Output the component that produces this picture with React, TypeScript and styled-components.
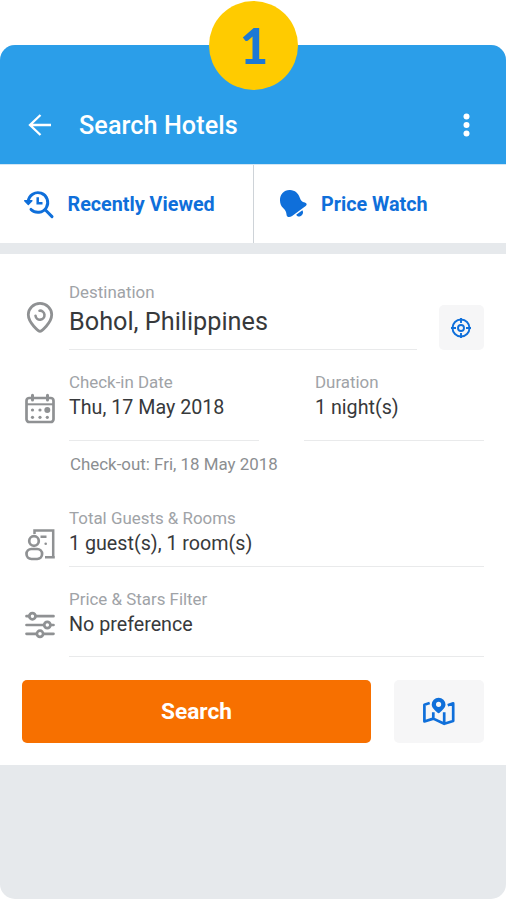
import React from "react";
import styled, { createGlobalStyle } from "styled-components";

const GlobalStyle = createGlobalStyle`
  * { box-sizing: border-box; }
  body { margin: 0; background: #fff; font-family: Roboto, "Liberation Sans", sans-serif; }
  button { font-family: inherit; border: 0; padding: 0; margin: 0; cursor: pointer; }
  svg { display: block; flex: none; }
`;

const blue = "#0f6fda";
const gray = "#8f9193";

const Page = styled.div`
  position: relative;
  width: 506px;
  height: 900px;
  padding: 45px 0 1px;
`;

const StepBadge = styled.div`
  position: absolute;
  top: 1px;
  left: 209px;
  width: 89px;
  height: 89px;
  padding-left: 1px;
  border-radius: 50%;
  background: #ffcb00;
  color: #1c79d4;
  font: 900 48.5px/88px Lato, sans-serif;
  text-align: center;
`;

const Phone = styled.main`
  height: 854px;
  border-radius: 15px;
  overflow: hidden;
  background: #e6e9ec;
`;

const AppBar = styled.header`
  height: 119px;
  padding: 60px 28px 18px 27px;
  display: flex;
  align-items: center;
  background: #2b9ee9;
  color: #fff;
`;

const Title = styled.h1`
  flex: 1;
  margin: 0 0 0 27px;
  font-size: 25.2px;
  line-height: 42px;
  padding-top: 1px;
  font-weight: 500;
  letter-spacing: 0.07px;
`;

const IconButton = styled.button`
  padding-bottom: 2px;
  background: none;
  color: inherit;
`;

const Tabs = styled.nav`
  display: flex;
  height: 79px;
  margin-bottom: 11px;
  border-top: 1px solid #d3e6f4;
  background: #fff;
`;

const Tab = styled.button`
  flex: 1;
  display: flex;
  align-items: center;
  gap: 12.5px;
  padding: 0 0 0 23px;
  background: #fff;
  color: ${blue};
  font-size: 19.75px;
  font-weight: 700;
  & + & { border-left: 1px solid #ced3d8; }
`;

const Form = styled.section`
  height: 511px;
  padding: 0 22px 0 24px;
  background: #fff;
`;

const Row = styled.div<{ $height: number; $icon: number }>`
  display: flex;
  height: ${(p) => p.$height}px;
  > svg { margin: ${(p) => p.$icon}px 13px 0 0; }
`;

const Field = styled.div<{ $top: number; $width?: number; $inset?: number }>`
  flex: ${(p) => (p.$width ? `0 0 ${p.$width}px` : "1")};
  padding: ${(p) => p.$top}px 0 0 ${(p) => p.$inset ?? 0}px;
  border-bottom: 1px solid #e9eaeb;
`;

const Label = styled.div`
  color: #a0a3a7;
  font-size: 16.9px;
  line-height: 20px;
`;

const Value = styled.div<{ $large?: boolean }>`
  color: #37393b;
  font-size: ${(p) => (p.$large ? 25.25 : 19.7)}px;
  line-height: ${(p) => (p.$large ? 40 : 32)}px;
`;

const LocateButton = styled.button`
  width: 45px;
  height: 45px;
  margin: 51px 0 0 22px;
  padding: 0 1px 0 0;
  display: grid;
  place-items: center;
  border-radius: 5px;
  background: #f6f6f7;
  color: ${blue};
`;

const Spacer = styled.div`
  flex: 1;
`;

const CheckOut = styled.div`
  height: 46px;
  padding-left: 46px;
  color: #8b8e91;
  font-size: 16.9px;
  line-height: 47px;
`;

const Actions = styled.div`
  display: flex;
  justify-content: space-between;
  margin: 23px 0 0 -2px;
`;

const SearchButton = styled.button`
  width: 349px;
  height: 63px;
  border-radius: 5px;
  background: #f77000;
  color: #fff;
  font-size: 22.7px;
  font-weight: 700;
  line-height: 64px;
`;

const MapButton = styled.button`
  width: 90px;
  height: 63px;
  padding-right: 1px;
  display: grid;
  place-items: center;
  border-radius: 5px;
  background: #f6f6f7;
  color: ${blue};
`;

const BackIcon = () => (
  <svg width="25" height="24" viewBox="0 0 25 24" fill="none" stroke="currentColor" strokeWidth="2.3">
    <path d="M13.5 2 3 12l10.5 10M3 12h21" />
  </svg>
);

const MoreIcon = () => (
  <svg width="22" height="26" viewBox="0 0 22 26" fill="currentColor">
    <circle cx="10.5" cy="4.5" r="3" />
    <circle cx="10.5" cy="13" r="3" />
    <circle cx="10.5" cy="21.5" r="3" />
  </svg>
);

const HistoryIcon = () => (
  <svg width="32" height="32" viewBox="23 188 32 32" fill="none" stroke="currentColor" strokeWidth="2.9">
    <path d="M28.2 201.5a9.8 9.8 0 1 1 2.8 7.9" strokeLinecap="round" />
    <path d="M45.2 209.8 52 216.6" strokeLinecap="round" strokeWidth="3" />
    <path d="M37.7 197.3v5.9h4.8" strokeWidth="2.5" />
    <path d="M24.7 200.8h7.2l-3.6 3.7z" fill="currentColor" strokeWidth="1.4" strokeLinejoin="round" />
  </svg>
);

const BellIcon = () => (
  <svg width="32" height="32" viewBox="277 188 32 32" fill="currentColor">
    <path d="M280 200.5c-.3-6 4.3-10.7 10-10.4 5 .2 8.4 3.3 9.9 7.8.9 2.7 2.1 3.9 5 4.7 2 .6 2.4 2.3.8 3.500l-13.600 9.900c-2.700 1.800-5.200 1.200-5.500-1.100-.4-3.300-1.200-5-3.500-6.900-2-1.700-3-4.400-3.100-7.500z" />
    <path d="m296.200 214.700 6.200-4.500c1.400 2.300.3 5.200-2.100 6-1.700.6-3.400.1-4.100-1.500z" />
  </svg>
);

const PinIcon = () => (
  <svg width="32" height="34" viewBox="24 300 32 34" fill="none" stroke={gray}>
    <path d="M40 331.300c-1 0-11.700-8-11.700-16.700a11.700 11.200 0 0 1 23.400 0c0 8.700-10.700 16.700-11.700 16.700z" strokeWidth="2.800" strokeLinejoin="round" />
    <path d="M39.500 310.700a4.500 4.500 0 1 1-4 5" strokeWidth="2.600" strokeLinecap="round" />
  </svg>
);

const CalendarIcon = () => (
  <svg width="32" height="32" viewBox="24 392 32 32" fill="none" stroke={gray} strokeWidth="2.7">
    <rect x="26.5" y="398" width="27" height="24" rx="2.8" />
    <path d="M26.5 404.3h27" strokeWidth="2" />
    <path d="M32.5 395.3v4.6M47.5 395.3v4.6" strokeWidth="3" strokeLinecap="round" />
    <g fill={gray} stroke="none">
      <circle cx="32.5" cy="410" r="1.6" />
      <circle cx="40" cy="410" r="1.6" />
      <circle cx="47.3" cy="410" r="3" />
      <circle cx="32.5" cy="417.3" r="1.6" />
      <circle cx="40" cy="417.3" r="1.6" />
      <circle cx="47.3" cy="417.3" r="1.6" />
    </g>
  </svg>
);

const GuestIcon = () => (
  <svg width="32" height="32" viewBox="24 529 32 32" fill="none" stroke={gray} strokeWidth="2.7">
    <circle cx="34" cy="541" r="4.8" />
    <rect x="26.5" y="549" width="15.6" height="10" rx="4.9" />
    <path d="M34.5 534v-3.5h18.7v26.8M45 557.3h9.8M40.5 536.7h6" strokeWidth="2.5" />
    <circle cx="45.7" cy="543.7" r="1.3" fill={gray} stroke="none" />
  </svg>
);

const FilterIcon = () => (
  <svg width="32" height="30" viewBox="24 610 32 30" fill="none" stroke={gray} strokeWidth="2.7" strokeLinecap="round">
    <path d="M26.5 616.2h2.7M35.5 616.2h18M26.5 625h17.5M50.6 625h2.9M26.5 633.8h10.2M43.3 633.8h10.2" />
    <circle cx="32.4" cy="616.2" r="3.1" />
    <circle cx="47.3" cy="625" r="3.1" />
    <circle cx="40" cy="633.8" r="3.1" />
  </svg>
);

const TargetIcon = () => (
  <svg width="22" height="22" viewBox="0 0 22 22" fill="none" stroke="currentColor" strokeWidth="1.9">
    <circle cx="11" cy="11" r="8.5" />
    <circle cx="11" cy="11" r="3" />
    <path d="M11 1v5M11 16v5M1 11h5M16 11h5" />
  </svg>
);

const MapIcon = () => (
  <svg width="34" height="30" viewBox="422 696.5 34 30" fill="none" stroke="currentColor" strokeWidth="2.7" strokeLinejoin="round">
    <path d="m429.7 702.5-5.3 1.7v16.8l8.9-2.9 10.9 5.2 9-2.8v-17.6l-5.5 1.8M433.300 711.700v6.500M444.200 711.700v11.500" />
    <path fill="currentColor" fillRule="evenodd" stroke="none" d="M438.600 697.200a6.900 6.900 0 0 0-6.900 6.900c0 3.700 3.700 5.900 5.600 8q1.300 1.300 2.600 0c1.900-2.100 5.600-4.300 5.600-8a6.900 6.900 0 0 0-6.900-6.900zm0 4a2.600 2.600 0 1 1 0 5.200 2.600 2.600 0 0 1 0-5.200z" />
  </svg>
);

export default function App() {
  return (
    <Page>
      <GlobalStyle />
      <Phone>
        <AppBar>
          <IconButton aria-label="Back"><BackIcon /></IconButton>
          <Title>Search Hotels</Title>
          <IconButton aria-label="More options"><MoreIcon /></IconButton>
        </AppBar>
        <Tabs>
          <Tab><HistoryIcon />Recently Viewed</Tab>
          <Tab><BellIcon />Price Watch</Tab>
        </Tabs>
        <Form>
          <Row $height={96} $icon={46}>
            <PinIcon />
            <Field $top={28}>
              <Label>Destination</Label>
              <Value $large>Bohol, Philippines</Value>
            </Field>
            <LocateButton aria-label="Use my location"><TargetIcon /></LocateButton>
          </Row>
          <Row $height={91} $icon={42}>
            <CalendarIcon />
            <Field $top={22} $width={190}>
              <Label>Check-in Date</Label>
              <Value>Thu, 17 May 2018</Value>
            </Field>
            <Spacer />
            <Field $top={22} $width={180} $inset={11}>
              <Label>Duration</Label>
              <Value>1 night(s)</Value>
            </Field>
          </Row>
          <CheckOut>Check-out: Fri, 18 May 2018</CheckOut>
          <Row $height={80} $icon={42}>
            <GuestIcon />
            <Field $top={21}>
              <Label>Total Guests &amp; Rooms</Label>
              <Value>1 guest(s), 1 room(s)</Value>
            </Field>
          </Row>
          <Row $height={90} $icon={43}>
            <FilterIcon />
            <Field $top={22}>
              <Label>Price &amp; Stars Filter</Label>
              <Value>No preference</Value>
            </Field>
          </Row>
          <Actions>
            <SearchButton>Search</SearchButton>
            <MapButton aria-label="View map"><MapIcon /></MapButton>
          </Actions>
        </Form>
      </Phone>
      <StepBadge>1</StepBadge>
    </Page>
  );
}
